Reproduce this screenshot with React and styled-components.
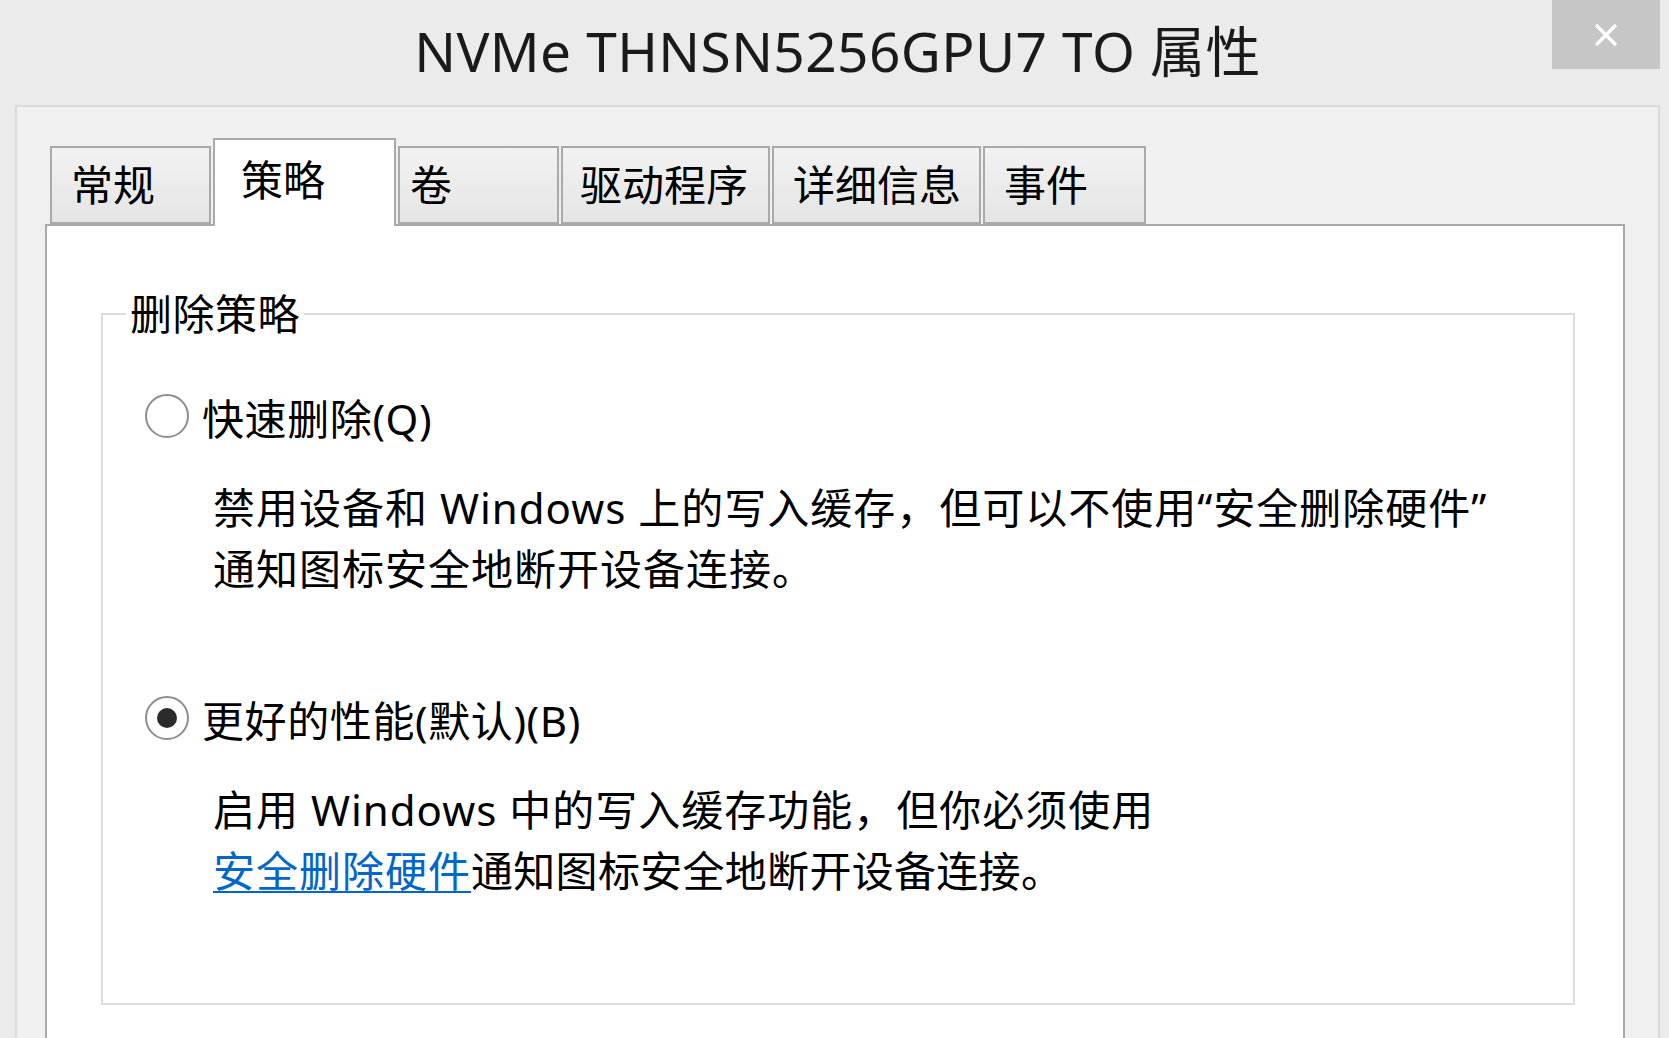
import React from "react";
import styled, { createGlobalStyle } from "styled-components";

const FONT = `"Noto Sans", "Noto Sans CJK SC", sans-serif`;

const GlobalStyle = createGlobalStyle`
  html, body {
    margin: 0;
    padding: 0;
    background: #ebebeb;
  }
  body {
    font-family: ${FONT};
    overflow: hidden;
  }
`;

const Window = styled.div`
  width: 1669px;
  height: 1038px;
  overflow: hidden;
  background: #ebebeb;
  display: flex;
  flex-direction: column;
`;

const TitleBar = styled.div`
  height: 105px;
  flex: none;
  display: grid;
  grid-template-columns: 1fr auto 1fr;
  align-items: center;
`;

const Title = styled.h1`
  grid-column: 2;
  margin: 0 0 4px 0;
  font-family: ${FONT};
  font-weight: 400;
  font-size: 55px;
  letter-spacing: 0.4px;
  line-height: 1;
  color: #1a1a1a;
  white-space: nowrap;
  padding-left: 6px;
`;

const CloseButton = styled.button`
  grid-column: 3;
  justify-self: end;
  align-self: start;
  width: 108px;
  height: 69px;
  margin-right: 9px;
  border: none;
  background: #c6c6c6;
  display: flex;
  align-items: center;
  justify-content: center;
  padding: 0;
  cursor: pointer;
`;

const Body = styled.div`
  flex: 1;
  margin: 0 9px 0 15px;
  border: 2px solid #dadada;
  border-bottom: none;
  background: #f0f0f0;
  padding: 31px 33px 0 28px;
  display: flex;
  flex-direction: column;
`;

const TabStrip = styled.div`
  display: flex;
  align-items: flex-end;
  gap: 2px;
  padding-left: 5px;
  position: relative;
  z-index: 1;
`;

const Tab = styled.div`
  box-sizing: border-box;
  width: ${(p) => p.$w}px;
  height: ${(p) => (p.$active ? 88 : 78)}px;
  margin-bottom: ${(p) => (p.$active ? -2 : 0)}px;
  padding-left: ${(p) => p.$pad}px;
  padding-bottom: ${(p) => (p.$active ? 6 : 0)}px;
  border: 2px solid #a9a9a9;
  border-bottom: ${(p) => (p.$active ? "none" : "2px solid #a9a9a9")};
  background: ${(p) =>
    p.$active ? "#ffffff" : "linear-gradient(#f2f2f2, #e5e5e5)"};
  display: flex;
  align-items: center;
  font-size: 42px;
  line-height: 1;
  color: #000;
  white-space: nowrap;
`;

const TabPanel = styled.div`
  flex: 1;
  background: #ffffff;
  border: 2px solid #a9a9a9;
  border-bottom: none;
  padding: 58px 48px 0 54px;
`;

const GroupBox = styled.fieldset`
  margin: 0;
  padding: 0;
  border: 2px solid #dcdcdc;
  min-width: 0;
`;

const Legend = styled.legend`
  margin-left: 23px;
  padding: 0 4px;
  font-size: 42px;
  letter-spacing: 0.5px;
  line-height: 60px;
  color: #000;
`;

const GroupContent = styled.div`
  padding: 42px 0 102px 42px;
  display: flex;
  flex-direction: column;
`;

const Option = styled.label`
  display: flex;
  align-items: center;
  gap: 13px;
  height: 60px;
  font-size: 42px;
  letter-spacing: 0.6px;
  color: #000;
  margin-top: ${(p) => p.$top || 0}px;
  cursor: default;
`;

const RadioCircle = styled.span`
  box-sizing: border-box;
  width: 44px;
  height: 44px;
  flex: none;
  border-radius: 50%;
  border: 2px solid #8e8e8e;
  background: radial-gradient(circle, #ffffff 60%, #f1f1f1 100%);
  display: flex;
  align-items: center;
  justify-content: center;

  &::after {
    content: "";
    width: 20px;
    height: 20px;
    border-radius: 50%;
    background: #2b2b2b;
    display: ${(p) => (p.$checked ? "block" : "none")};
  }
`;

const Description = styled.p`
  margin: 31px 0 0 68px;
  font-size: 42px;
  letter-spacing: 1px;
  line-height: 61px;
  color: #000;
  white-space: nowrap;
`;

const LinkTail = styled.span`
  letter-spacing: 0.3px;
`;

const Link = styled.a`
  color: #0066cc;
  text-decoration: underline;
  text-underline-offset: 4px;
  text-decoration-thickness: 2px;
`;

const tabs = [
  { label: "常规", w: 161, pad: 19 },
  { label: "策略", w: 183, pad: 26, active: true },
  { label: "卷", w: 161, pad: 10 },
  { label: "驱动程序", w: 209, pad: 17 },
  { label: "详细信息", w: 209, pad: 19 },
  { label: "事件", w: 163, pad: 19 },
];

export default function App() {
  return (
    <>
      <GlobalStyle />
      <Window>
        <TitleBar>
          <Title>NVMe THNSN5256GPU7 TO 属性</Title>
          <CloseButton aria-label="关闭">
            <svg width="26" height="26" viewBox="0 0 26 26">
              <path
                d="M3 3 L23 23 M23 3 L3 23"
                stroke="#ffffff"
                strokeWidth="3.2"
                fill="none"
              />
            </svg>
          </CloseButton>
        </TitleBar>

        <Body>
          <TabStrip>
            {tabs.map((t) => (
              <Tab key={t.label} $w={t.w} $pad={t.pad} $active={t.active}>
                {t.label}
              </Tab>
            ))}
          </TabStrip>

          <TabPanel>
            <GroupBox>
              <Legend>删除策略</Legend>
              <GroupContent>
                <Option>
                  <RadioCircle />
                  快速删除(Q)
                </Option>
                <Description>
                  禁用设备和 Windows 上的写入缓存，但可以不使用“安全删除硬件”
                  <br />
                  通知图标安全地断开设备连接。
                </Description>

                <Option $top={89}>
                  <RadioCircle $checked />
                  更好的性能(默认)(B)
                </Option>
                <Description>
                  启用 Windows 中的写入缓存功能，但你必须使用
                  <br />
                  <Link href="#">安全删除硬件</Link>
                  <LinkTail>通知图标安全地断开设备连接。</LinkTail>
                </Description>
              </GroupContent>
            </GroupBox>
          </TabPanel>
        </Body>
      </Window>
    </>
  );
}
